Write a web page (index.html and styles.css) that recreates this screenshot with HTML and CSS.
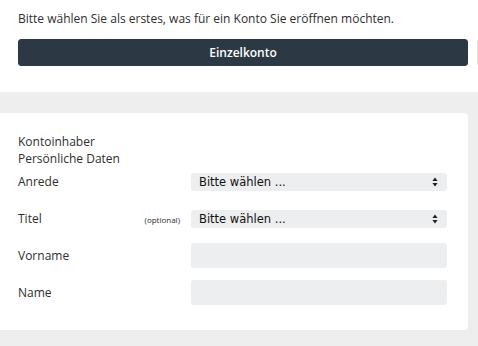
FILE: index.html
```html
<!DOCTYPE html>
<html lang="de">
<head>
    <meta charset="UTF-8">
    <meta name="viewport" content="width=device-width, initial-scale=1.0">
    <title>Konto eröffnen</title>
    <link rel="stylesheet" href="styles.css">
</head>
<body>
<div class="intro">
    <p class="lead">Bitte wählen Sie als erstes, was für ein Konto Sie eröffnen möchten.</p>
    <div class="choices">
        <button class="choice active">Einzelkonto</button>
        <button class="choice" aria-label="Gemeinschaftskonto"></button>
    </div>
</div>
<div class="main">
    <div class="card">
        <div class="heading">
            <div>Kontoinhaber</div>
            <div>Persönliche Daten</div>
        </div>
        <div class="row">
            <label class="label">Anrede</label>
            <div class="select">
                <span>Bitte wählen ...</span>
                <svg class="arrows" width="6" height="10" viewBox="0 0 6 10"><path d="M3 0.5 L5.6 4 H0.4 Z M3 9.5 L5.6 6 H0.4 Z" fill="#222"/></svg>
            </div>
        </div>
        <div class="row">
            <label class="label">Titel <span class="optional">(optional)</span></label>
            <div class="select">
                <span>Bitte wählen ...</span>
                <svg class="arrows" width="6" height="10" viewBox="0 0 6 10"><path d="M3 0.5 L5.6 4 H0.4 Z M3 9.5 L5.6 6 H0.4 Z" fill="#222"/></svg>
            </div>
        </div>
        <div class="row">
            <label class="label">Vorname</label>
            <input class="input" type="text">
        </div>
        <div class="row">
            <label class="label">Name</label>
            <input class="input" type="text">
        </div>
    </div>
</div>
</body>
</html>
```

FILE: styles.css
```css
body {
    margin: 0;
    font-family: "Open Sans", Arial, sans-serif;
    font-size: 12px;
    color: #2e2e2e;
    background-color: #eeeeee;
    overflow: hidden;
}

.intro {
    background-color: #fff;
    padding: 10px 0 0 18px;
    height: 82px;
}

.lead {
    margin: 0;
    line-height: 18px;
}

.choices {
    display: flex;
    gap: 9px;
    margin-top: 11px;
    width: 600px;
}

.choice {
    flex: none;
    height: 27px;
    border: 1px solid #e4e4e4;
    border-radius: 3px;
    background-color: #fff;
    font-family: "Open Sans", Arial, sans-serif;
    font-size: 12px;
    font-weight: 600;
    color: #2c3843;
    width: 200px;
}

.choice.active {
    width: 450px;
    border-color: #2c3843;
    background-color: #2c3843;
    color: #fff;
}

.main {
    padding-top: 21px;
    height: 233px;
}

.card {
    width: 429px;
    background-color: #fff;
    border-radius: 0 4px 4px 0;
    padding: 20px 21px 25px 18px;
}

.heading {
    line-height: 17px;
    margin-bottom: 2px;
}

.row {
    display: flex;
    align-items: center;
    height: 25px;
    margin-bottom: 12px;
}

.row:last-child {
    margin-bottom: 0;
}

.label {
    width: 162px;
    margin-right: 11px;
    display: flex;
    justify-content: space-between;
    align-items: baseline;
}

.optional {
    font-size: 8px;
}

.select {
    flex: 1;
    height: 18px;
    border-radius: 3px;
    background-color: #eceeef;
    display: flex;
    align-items: center;
    justify-content: space-between;
    padding: 0 9px 0 8px;
    font-family: "DejaVu Sans", sans-serif;
    font-size: 11.5px;
    color: #111;
}

.input {
    flex: 1;
    height: 25px;
    box-sizing: border-box;
    border: none;
    border-radius: 3px;
    background-color: #eceeef;
    margin: 0;
}
```
